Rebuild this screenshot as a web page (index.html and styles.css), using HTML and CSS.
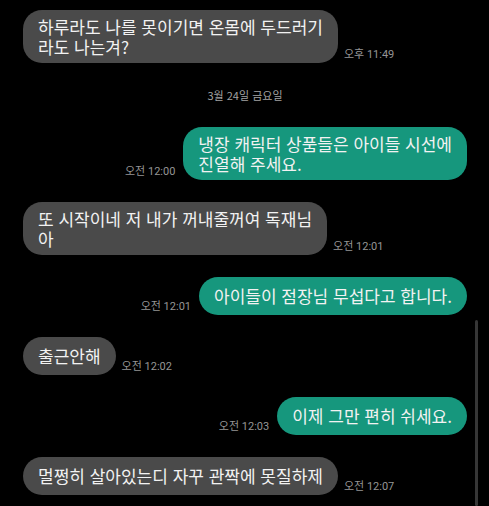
FILE: index.html
```html
<!DOCTYPE html>
<html lang="ko">
<head>
    <meta charset="UTF-8">
    <meta name="viewport" content="width=device-width, initial-scale=1.0">
    <title>대화</title>
    <link rel="stylesheet" href="styles.css">
</head>
<body>
    <div class="chat">
        <div class="row in">
            <div class="bubble">하루라도 나를 못이기면 온몸에 두드러기<br>라도 나는겨?</div>
            <span class="time">오후 11:49</span>
        </div>

        <div class="date">3월 24일 금요일</div>

        <div class="row out">
            <span class="time">오전 12:00</span>
            <div class="bubble">냉장 캐릭터 상품들은 아이들 시선에<br>진열해 주세요.</div>
        </div>

        <div class="row in">
            <div class="bubble">또 시작이네 저 내가 꺼내줄꺼여 독재님<br>아</div>
            <span class="time">오전 12:01</span>
        </div>

        <div class="row out">
            <span class="time">오전 12:01</span>
            <div class="bubble">아이들이 점장님 무섭다고 합니다.</div>
        </div>

        <div class="row in">
            <div class="bubble">출근안해</div>
            <span class="time">오전 12:02</span>
        </div>

        <div class="row out">
            <span class="time">오전 12:03</span>
            <div class="bubble">이제 그만 편히 쉬세요.</div>
        </div>

        <div class="row in">
            <div class="bubble">멀쩡히 살아있는디 자꾸 관짝에 못질하제</div>
            <span class="time">오전 12:07</span>
        </div>
    </div>

    <!-- scrollbar thumb -->
    <div class="scroll-thumb"></div>
</body>
</html>
```

FILE: styles.css
```css
html, body {
    margin: 0;
    height: 100%;
    background: #000;
    overflow: hidden;
}

body {
    position: relative;
    font-family: "Noto Sans CJK KR", "Noto Sans", sans-serif;
    color: #f2f2f2;
}

.chat {
    display: flex;
    flex-direction: column;
    gap: 22px;
    padding: 10px 22px 0 23px;
}

.row {
    display: flex;
    align-items: flex-end;
    gap: 6px;
}

.row.out {
    justify-content: flex-end;
    gap: 8px;
}

.bubble {
    box-sizing: border-box;
    min-height: 38px;
    display: flex;
    align-items: center;
    padding: 6.5px 15px;
    border-radius: 19px;
    font-size: 17px;
    line-height: 20px;
    white-space: nowrap;
}

.in .bubble {
    background: #4a4a4a;
}

.out .bubble {
    background: #16977d;
}

.time {
    font-family: "Roboto", "Noto Sans CJK KR", sans-serif;
    font-size: 11px;
    line-height: 12px;
    color: #959595;
    padding-bottom: 2px;
}

.date {
    height: 20px;
    line-height: 20px;
    text-align: center;
    font-size: 11px;
    color: #a3a3a3;
}

.scroll-thumb {
    position: absolute;
    left: 475px;
    top: 320px;
    width: 3px;
    bottom: 0;
    background: #363636;
    border-radius: 2px;
}
```
